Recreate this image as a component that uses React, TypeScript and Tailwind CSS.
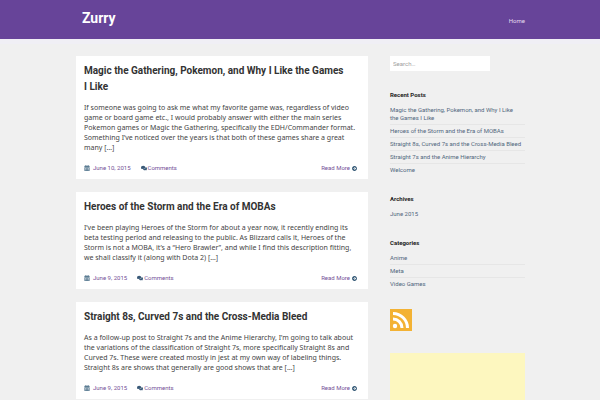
import { Fragment } from 'react';
import { FaCalendarAlt, FaComments, FaArrowCircleRight } from 'react-icons/fa';

const posts = [
  {
    title: ['Magic the Gathering, Pokemon, and Why I Like the Games', 'I Like'],
    body: [
      'If someone was going to ask me what my favorite game was, regardless of video',
      'game or board game etc., I would probably answer with either the main series',
      'Pokemon games or Magic the Gathering, specifically the EDH/Commander format.',
      'Something I’ve noticed over the years is that both of these games share a great',
      'many […]',
    ],
    date: 'June 10, 2015',
  },
  {
    title: ['Heroes of the Storm and the Era of MOBAs'],
    body: [
      'I’ve been playing Heroes of the Storm for about a year now, it recently ending its',
      'beta testing period and releasing to the public. As Blizzard calls it, Heroes of the',
      'Storm is not a MOBA, it’s a “Hero Brawler”, and while I find this description fitting,',
      'we shall classify it (along with Dota 2) […]',
    ],
    date: 'June 9, 2015',
  },
  {
    title: ['Straight 8s, Curved 7s and the Cross-Media Bleed'],
    body: [
      'As a follow-up post to Straight 7s and the Anime Hierarchy, I’m going to talk about',
      'the variations of the classification of Straight 7s, more specifically Straight 8s and',
      'Curved 7s. These were created mostly in jest at my own way of labeling things.',
      'Straight 8s are shows that generally are good shows that are […]',
    ],
    date: 'June 9, 2015',
  },
];

const recent = [
  ['Magic the Gathering, Pokemon, and Why I Like', 'the Games I Like'],
  ['Heroes of the Storm and the Era of MOBAs'],
  ['Straight 8s, Curved 7s and the Cross-Media Bleed'],
  ['Straight 7s and the Anime Hierarchy'],
  ['Welcome'],
];

function Lines({ lines }: { lines: string[] }) {
  return (
    <>
      {lines.map((line, i) => (
        <Fragment key={line}>
          {i > 0 && <br />}
          {line}
        </Fragment>
      ))}
    </>
  );
}

function PostCard({ post }: { post: (typeof posts)[number] }) {
  return (
    <article className="bg-white px-2 pt-[7px] pb-1.5">
      <h2 className="text-[10px] leading-4 font-bold text-[#333] whitespace-nowrap">
        <a href="#">
          <Lines lines={post.title} />
        </a>
      </h2>
      <p className="mt-2 font-['Noto_Sans',sans-serif] text-[7px] leading-[10px] text-[#444] whitespace-nowrap">
        <Lines lines={post.body} />
      </p>
      <div className="mt-[10px] flex items-center text-[6px] leading-[10px] text-[#744f96]">
        <FaCalendarAlt className="size-[6px] text-[#5b7c93]" />
        <a href="#" className="ml-[3px]">{post.date}</a>
        <a href="#" className="ml-2.5 flex items-center gap-px">
          <FaComments className="size-[6px] text-[#3a5a78]" />
          Comments
        </a>
        <a href="#" className="ml-auto mr-[3px] flex items-center gap-0.5">
          Read More
          <FaArrowCircleRight className="size-[5px] text-[#2f5573]" />
        </a>
      </div>
    </article>
  );
}

function LinkList({ title, items }: { title: string; items: string[][] }) {
  return (
    <section className="mb-[19px]">
      <h3 className="text-[6px] leading-2 font-bold text-[#222]">{title}</h3>
      <ul className="mt-[5px] divide-y divide-[#e6e6e6] text-[6px] leading-2 text-[#50677d]">
        {items.map((item) => (
          <li key={item[0]} className="py-0.5 whitespace-nowrap">
            <a href="#">
              <Lines lines={item} />
            </a>
          </li>
        ))}
      </ul>
    </section>
  );
}

export default function App() {
  return (
    <div className="h-screen overflow-hidden bg-[#f0f0f0] font-[Roboto,sans-serif]">
      <header className="bg-[#674499]">
        <div className="mx-auto flex h-[39px] max-w-[450px] items-center justify-between pl-[7px] text-white">
          <a href="#" className="pb-1 text-[14px] leading-5 font-bold">
            Zurry
          </a>
          <nav className="pb-1">
            <a href="#" className="text-[6px] leading-2 text-[#e4dcf0]">Home</a>
          </nav>
        </div>
      </header>
      <div className="h-[5px] bg-[#f0eff5]" />

      <div className="mx-auto flex max-w-[450px] gap-[22px] pt-3 pl-px">
        <main className="flex min-w-0 flex-1 flex-col gap-[13px]">
          {posts.map((post) => (
            <PostCard key={post.title[0]} post={post} />
          ))}
        </main>

        <aside className="w-[135px] shrink-0">
          <input
            type="search"
            aria-label="Search"
            placeholder="Search…"
            className="mb-5 block h-[15px] w-[100px] bg-white px-[3px] text-[6px] placeholder:text-[#a0a0a0]"
          />
          <LinkList title="Recent Posts" items={recent} />
          <LinkList title="Archives" items={[['June 2015']]} />
          <LinkList title="Categories" items={[['Anime'], ['Meta'], ['Video Games']]} />
          <a href="#" aria-label="RSS feed" className="block w-[22px]">
            <svg viewBox="0 0 22 22" className="size-[22px]">
              <rect width="22" height="22" fill="#f3b234" />
              <circle cx="5" cy="17" r="2.2" fill="#fff" />
              <path d="M3 10a9 9 0 0 1 9 9M3 4.500a14.500 14.500 0 0 1 14.500 14.500" fill="none" stroke="#fff" strokeWidth="3" />
            </svg>
          </a>
          <div className="mt-[22px] h-[60px] bg-[#fdf7bf]" />
        </aside>
      </div>
    </div>
  );
}
